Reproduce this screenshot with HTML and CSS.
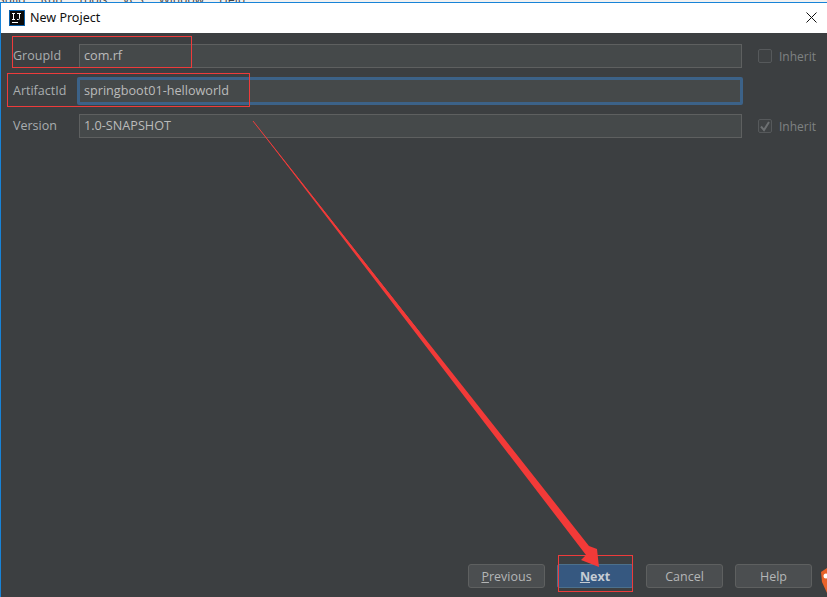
FILE: index.html
```html
<!DOCTYPE html>
<html lang="en">
<head>
<meta charset="utf-8">
<title>New Project</title>
<link rel="stylesheet" href="styles.css">
</head>
<body>
<div class="menu-strip"><span>Build</span><span>Run</span><span>Tools</span><span>VCS</span><span>Window</span><span>Help</span></div>
<div class="window">
  <header class="titlebar">
    <svg class="app-icon" width="16" height="16" viewBox="0 0 16 16"><rect width="16" height="16" fill="#0b5fa8"/><rect x="1" y="1" width="14" height="14" fill="#0a0a0a"/><rect x="3" y="12" width="6" height="1" fill="#fff"/><path d="M3 3.500h3M4.500 3.500v6M3 9.500h3M8 3.500h4M10.500 3.500v5q0 1-1 1H8" fill="none" stroke="#fff" stroke-width="1"/></svg>
    <span class="title">New Project</span>
    <svg class="close" width="11" height="11" viewBox="0 0 11 11"><path d="M0.500 0.500l10 10M10.500 0.500l-10 10" stroke="#111" stroke-width="1" fill="none"/></svg>
  </header>
  <main class="content">
    <form class="form">
      <label class="label">GroupId</label>
      <div class="field">com.rf</div>
      <div class="inherit"><span class="check"></span><span>Inherit</span></div>
      <label class="label">ArtifactId</label>
      <div class="field focused">springboot01-helloworld</div>
      <div class="inherit"></div>
      <label class="label">Version</label>
      <div class="field">1.0-SNAPSHOT</div>
      <div class="inherit"><span class="check"><svg width="12" height="12" viewBox="0 0 12 12"><path d="M2 6.500l3 3.500 5-8" fill="none" stroke="#6d7072" stroke-width="2"/></svg></span><span>Inherit</span></div>
    </form>
    <footer class="buttons">
      <button class="btn" type="button"><u>P</u>revious</button>
      <button class="btn primary" type="button"><u>N</u>ext</button>
      <button class="btn cancel" type="button">Cancel</button>
      <button class="btn" type="button">Help</button>
    </footer>
  </main>
</div>
<div class="mark mark-group"></div>
<div class="mark mark-artifact"></div>
<div class="mark mark-next"></div>
<svg class="arrow" width="827" height="597" viewBox="0 0 827 597">
  <line x1="253" y1="121" x2="420" y2="333" stroke="#e8403f" stroke-width="1"/>
  <path d="M253 121L589 546L597 549L599 567L581 560L586 555Z" fill="#f23a38"/>
  <path d="M827 568L821 572L822 582L827 593Z" fill="#e8622a"/>
  <circle cx="826" cy="576" r="2.500" fill="#fff"/>
</svg>
</body>
</html>
```

FILE: styles.css
```css
* { box-sizing: border-box; }
html, body { margin: 0; padding: 0; }
body {
  width: 827px;
  height: 597px;
  overflow: hidden;
  position: relative;
  background: #fff;
  font-family: "Open Sans", "Noto Sans", sans-serif;
  font-size: 12px;
}
.menu-strip {
  height: 2px;
  overflow: hidden;
  display: flex;
  gap: 15px;
  margin-left: -3px;
  color: #444;
  line-height: 0;
  background: #f1f1f1;
}
.window {
  height: 595px;
  display: flex;
  flex-direction: column;
  border-top: 1px solid #1883d7;
  border-left: 1px solid #1883d7;
}
.titlebar {
  flex: 0 0 30px;
  display: flex;
  align-items: center;
  padding: 0 10px 0 8px;
  background: #fff;
}
.app-icon { flex: none; }
.title {
  margin-left: 5px;
  font-family: "Noto Sans", sans-serif;
  font-size: 12.500px;
  line-height: 14px;
  color: #111;
}
.close { margin-left: auto; margin-bottom: 2px; }
.content {
  flex: 1;
  display: flex;
  flex-direction: column;
  background: #3c3f41;
  color: #bbbbbb;
}
.form {
  display: grid;
  grid-template-columns: 66px 663px 1fr;
  grid-auto-rows: 24px;
  row-gap: 11px;
  padding: 11px 0 0 12px;
}
.label { align-self: center; margin-bottom: 2px; font-size: 12.500px; color: #a9adaf; }
.field {
  border: 1px solid #5e6060;
  background: #45494a;
  padding-left: 4px;
  line-height: 20px;
  font-size: 12.650px;
  color: #bbbbbb;
}
.field.focused {
  border: 3px solid #3c6288;
  border-radius: 2px;
  margin: -2px -1px -2px -2px;
  line-height: 20px;
  padding-left: 4px;
}
.inherit {
  display: flex;
  align-items: center;
  gap: 7px;
  padding-left: 16px;
  color: #7f8283;
  font-size: 12px;
}
.check {
  width: 14px;
  height: 14px;
  border: 1px solid #56595b;
  border-radius: 2px;
  background: #3f4244;
  display: flex;
}
.buttons {
  margin-top: auto;
  display: flex;
  padding: 0 0 9px 467px;
  gap: 12px;
}
.btn {
  width: 77px;
  height: 24px;
  padding: 0;
  border: 1px solid #5e6060;
  border-radius: 3px;
  background: #4b4e50;
  color: #b4b6b7;
  font: 12.500px "Open Sans", "Noto Sans", sans-serif;
}
.btn.primary {
  width: 76px;
  background: #365880;
  border-color: #4c708c;
  border-radius: 2px;
  color: #c5ccd3;
  font-weight: 700;
}
.btn.cancel { margin-left: 1px; }
.mark {
  position: absolute;
  border: 1px solid #ee3b3b;
  pointer-events: none;
}
.mark-group { left: 12px; top: 36px; width: 180px; height: 32px; }
.mark-artifact { left: 7px; top: 73px; width: 243px; height: 34px; }
.mark-next { left: 558px; top: 555px; width: 75px; height: 37px; }
.arrow { position: absolute; left: 0; top: 0; pointer-events: none; }
```
